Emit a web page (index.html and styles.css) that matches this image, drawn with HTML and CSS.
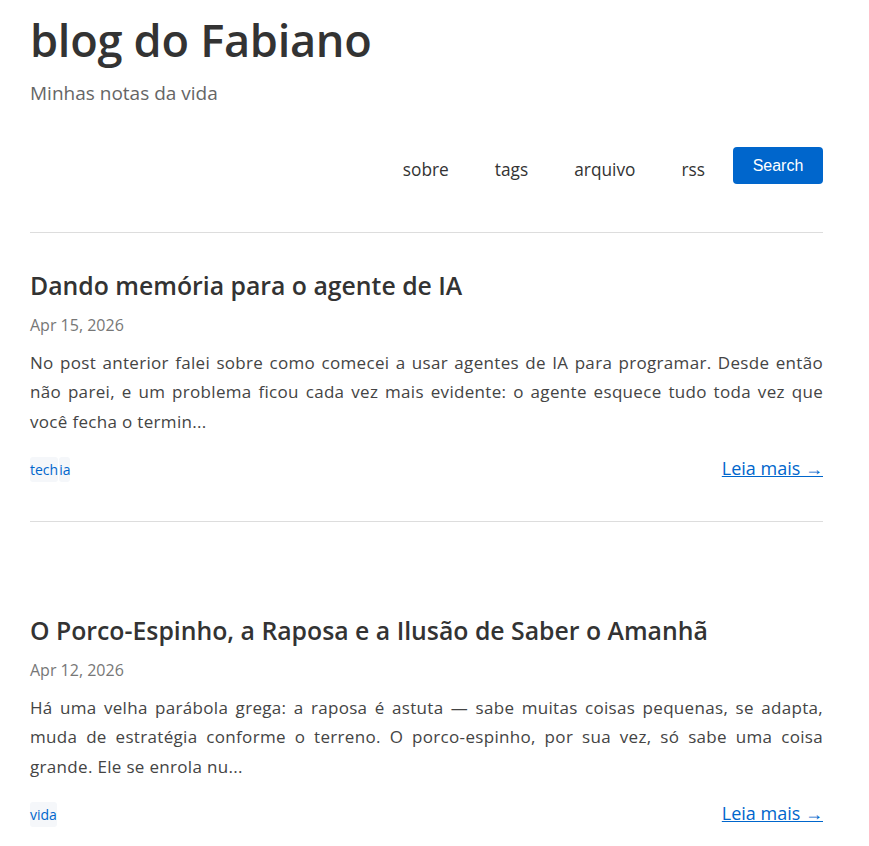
FILE: index.html
```html
<!DOCTYPE html>
<html lang="pt">
<head>
<meta charset="utf-8">
<title>blog do Fabiano</title>
<link rel="stylesheet" href="styles.css">
</head>
<body>
<div class="page">
  <header class="site-header">
    <h1 class="site-title">blog do Fabiano</h1>
    <p class="site-desc">Minhas notas da vida</p>
    <nav class="nav">
      <a href="#">sobre</a>
      <a href="#">tags</a>
      <a href="#">arquivo</a>
      <a href="#">rss</a>
      <button class="search-btn">Search</button>
    </nav>
  </header>
  <main>
    <article class="post">
      <h2 class="post-title">Dando memória para o agente de IA</h2>
      <div class="post-date">Apr 15, 2026</div>
      <p class="excerpt">No post anterior falei sobre como comecei a usar agentes de IA para programar. Desde então não parei, e um problema ficou cada vez mais evidente: o agente esquece tudo toda vez que você fecha o termin...</p>
      <div class="post-foot">
        <div class="tags"><span class="tag">tech</span><span class="tag">ia</span></div>
        <a class="more" href="#">Leia mais →</a>
      </div>
    </article>
    <article class="post">
      <h2 class="post-title">O Porco-Espinho, a Raposa e a Ilusão de Saber o Amanhã</h2>
      <div class="post-date">Apr 12, 2026</div>
      <p class="excerpt">Há uma velha parábola grega: a raposa é astuta — sabe muitas coisas pequenas, se adapta, muda de estratégia conforme o terreno. O porco-espinho, por sua vez, só sabe uma coisa grande. Ele se enrola nu...</p>
      <div class="post-foot">
        <div class="tags"><span class="tag">vida</span></div>
        <a class="more" href="#">Leia mais →</a>
      </div>
    </article>
  </main>
</div>
</body>
</html>
```
FILE: styles.css
```css
html, body { margin: 0; padding: 0; background: #fff; }
body {
  font-family: "Open Sans", "Noto Sans", sans-serif;
  color: #333;
}
.page {
  width: 793px;
  padding: 0 46px 0 30px;
}
.site-header {
  padding-top: 12px;
  border-bottom: 1px solid #ddd;
  padding-bottom: 48px;
}
.site-title {
  margin: 0;
  font-size: 45.2px;
  font-weight: 600;
  line-height: 56px;
  color: #333;
  letter-spacing: -0.3px;
}
.site-desc {
  margin: 12px 0 0;
  font-size: 19px;
  line-height: 26px;
  color: #666;
}
.nav {
  display: flex;
  justify-content: flex-end;
  align-items: center;
  gap: 46px;
  margin-top: 41px;
}
.nav a {
  font-size: 17.3px;
  color: #333;
  text-decoration: none;
  line-height: 24px;
  margin-top: 8px;
}
.search-btn {
  margin-left: -18px;
  width: 90px;
  height: 37px;
  background: #0066cc;
  color: #fff;
  border: none;
  border-radius: 4px;
  font-family: "Liberation Sans", Arial, sans-serif;
  font-size: 16px;
  padding: 0;
}
.post {
  border-bottom: 1px solid #ddd;
  padding: 36px 0 38px;
}
.post + .post { border-bottom: none; padding-top: 92px; }
.post-title {
  margin: 0;
  font-size: 24.8px;
  font-weight: 600;
  line-height: 32px;
  color: #333;
}
.post-date {
  margin-top: 12.5px;
  font-size: 16px;
  color: #777;
  line-height: 22px;
}
.excerpt {
  margin: 12px 0 0;
  font-size: 17px;
  letter-spacing: 0.32px;
  line-height: 29.5px;
  color: #444;
  text-align: justify;
}
.post-foot {
  display: flex;
  justify-content: space-between;
  align-items: center;
  margin-top: 20px;
}
.tags { display: flex; gap: 1px; }
.tag {
  background: #f5f7fa;
  color: #0066cc;
  font-size: 14px;
  line-height: 25px;
  border-radius: 3px;
}
.more {
  color: #0066cc;
  font-size: 18px;
  text-decoration: underline;
  margin-bottom: 3px;
}
```
